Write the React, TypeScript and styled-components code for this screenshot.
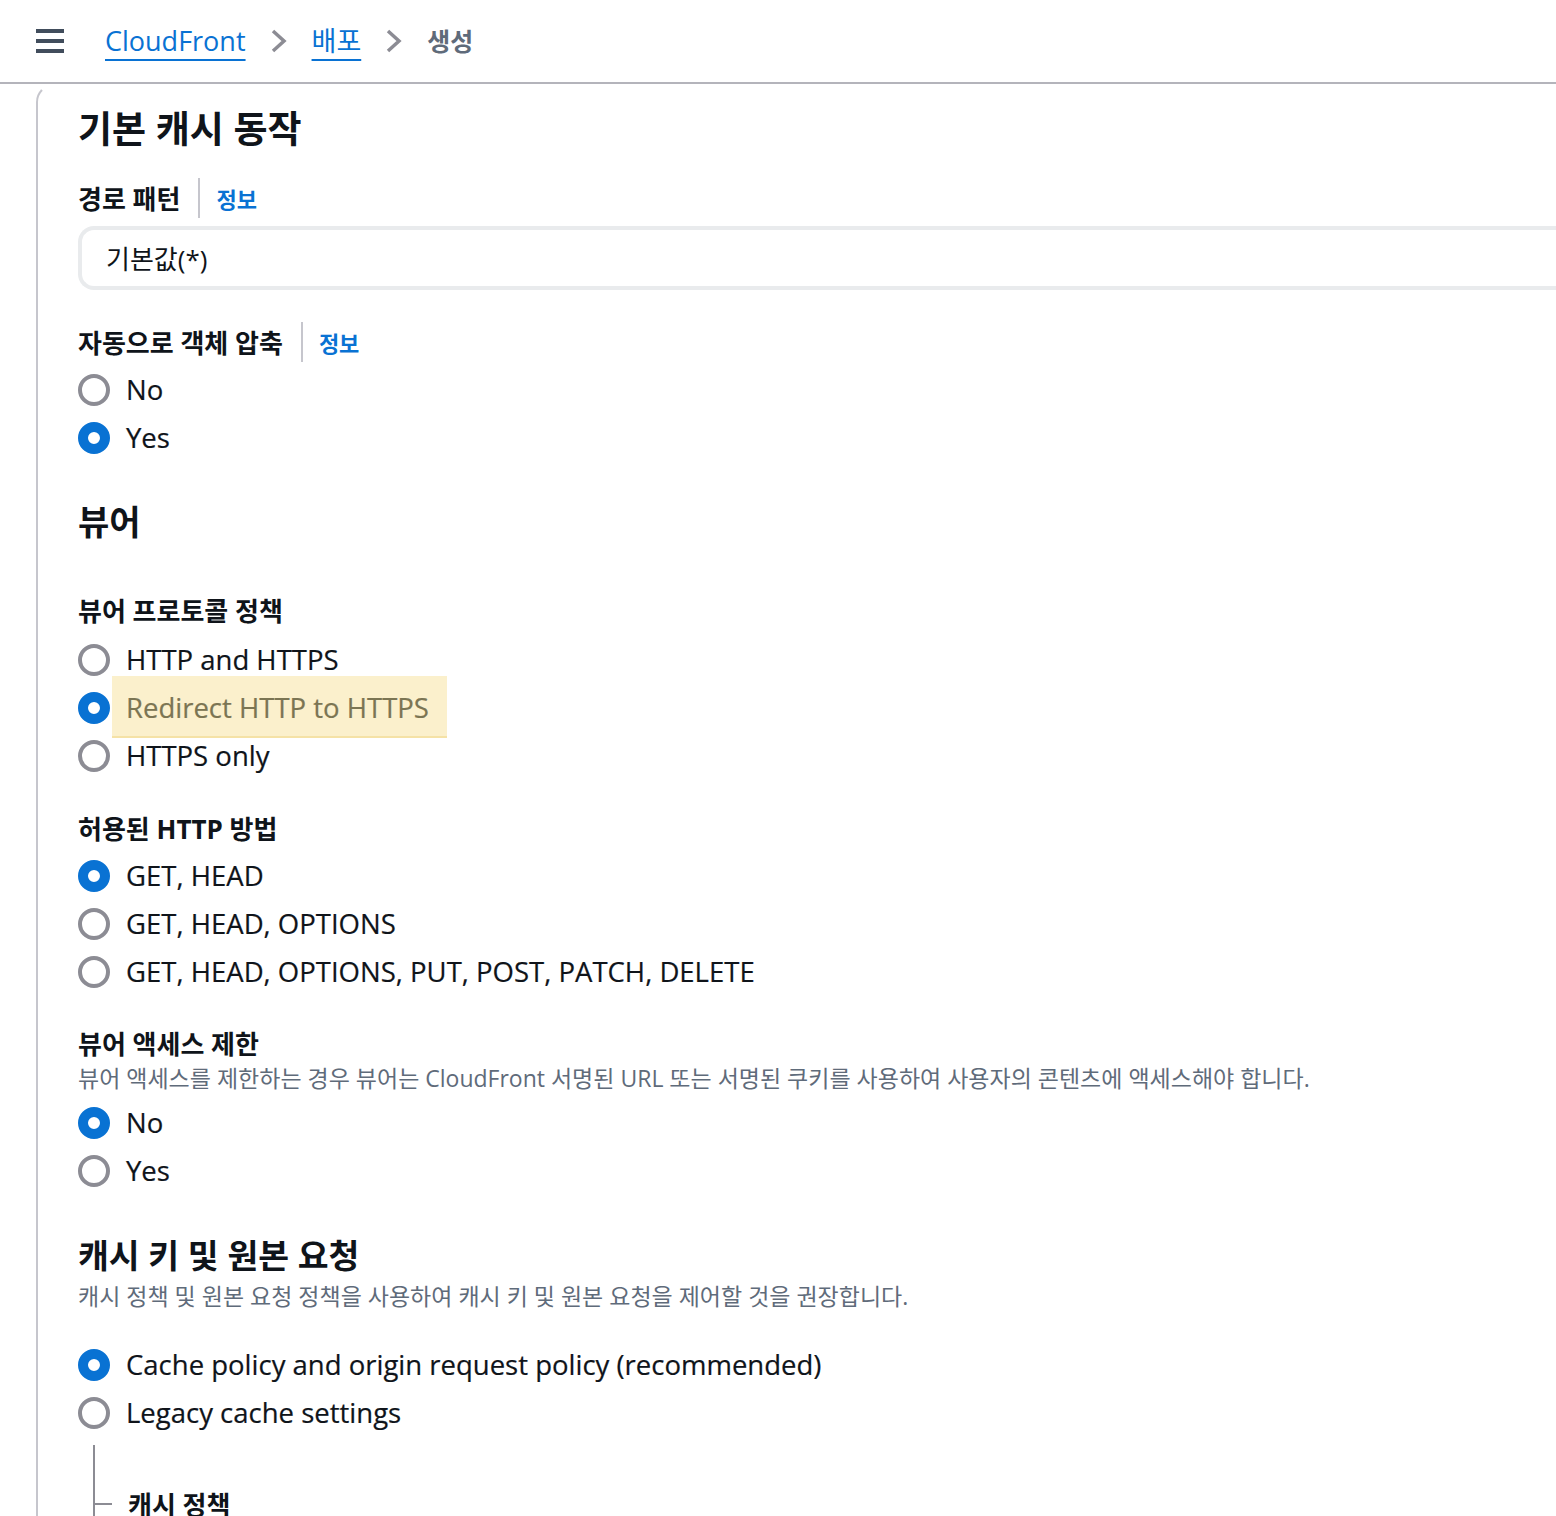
import React from "react";
import styled, { createGlobalStyle } from "styled-components";

const font = `"Open Sans", "Noto Sans CJK KR", sans-serif`;

const Global = createGlobalStyle`
  body {
    margin: 0;
    background: #fff;
    font-family: ${font};
    color: #0f141a;
    overflow: hidden;
  }
`;

const TopBar = styled.header`
  height: 82px;
  border-bottom: 2px solid #b4b4bb;
  display: flex;
  align-items: center;
  padding-left: 36px;
`;

const Burger = styled.button`
  width: 28px;
  height: 24px;
  padding: 0;
  border: 0;
  background: transparent;
  display: flex;
  flex-direction: column;
  justify-content: space-between;
  margin-right: 41px;
  span {
    display: block;
    height: 4px;
    background: #414d5c;
  }
`;

const Crumbs = styled.nav`
  display: flex;
  align-items: center;
  gap: 24px;
  font-size: 27px;
`;

const CrumbLink = styled.a`
  color: #0972d3;
  text-decoration: underline;
  text-decoration-thickness: 2px;
  text-underline-offset: 8px;
  line-height: 40px;
`;

const CrumbCurrent = styled.span`
  color: #5f6b7a;
  font-weight: 700;
  font-size: 25px;
  line-height: 40px;
`;

const Chevron = () => (
  <svg width="18" height="26" viewBox="0 0 18 26" fill="none">
    <path d="M3 3l11 10L3 23" stroke="#8c8c94" strokeWidth="3.5" />
  </svg>
);

const Body = styled.div`
  padding-left: 36px;
`;

const Panel = styled.main`
  border-left: 2px solid #c6c6cd;
  border-top: 2px solid transparent;
  border-top-left-radius: 18px;
  padding: 19px 0 0 40px;
  min-height: 1440px;
`;

const Title = styled.h1<{ $size?: number }>`
  margin: 0;
  font-size: ${(p) => p.$size ?? 37}px;
  line-height: 48px;
  font-weight: 700;
`;

const Section = styled.section<{ $gap: number }>`
  margin-top: ${(p) => p.$gap}px;
`;

const LabelRow = styled.div`
  display: flex;
  align-items: center;
  height: 40px;
`;

const Label = styled.span`
  font-size: 26px;
  font-weight: 700;
`;

const Divider = styled.span`
  width: 2px;
  height: 40px;
  background: #c6c6cd;
  margin: 0 16px 0 18px;
`;

const Info = styled.a`
  color: #0972d3;
  font-size: 22px;
  font-weight: 700;
`;

const Desc = styled.p<{ $top?: number }>`
  margin: ${(p) => p.$top ?? 0}px 0 0;
  color: #5f6b7a;
  font-size: 23px;
  line-height: 30px;
`;

const Field = styled.div`
  margin-top: 8px;
  height: 64px;
  box-sizing: border-box;
  border: 4px solid #e9ebed;
  border-right: 0;
  border-radius: 16px 0 0 16px;
  display: flex;
  align-items: center;
  padding-left: 24px;
  font-size: 26px;
`;

const Options = styled.div<{ $top: number }>`
  margin-top: ${(p) => p.$top}px;
  display: flex;
  flex-direction: column;
`;

const Option = styled.label`
  display: flex;
  align-items: center;
  height: 48px;
  gap: 16px;
`;

const Dot = styled.span<{ $on?: boolean }>`
  width: 32px;
  height: 32px;
  box-sizing: border-box;
  border-radius: 50%;
  border: ${(p) => (p.$on ? "10px solid #0972d3" : "4px solid #8c8c94")};
  background: #fff;
  flex: none;
`;

const OptionText = styled.span<{ $mark?: boolean }>`
  position: relative;
  font-size: 27.5px;
  line-height: 36px;
  color: ${(p) => (p.$mark ? "#7b7553" : "#0f141a")};
  -webkit-text-stroke: 0.2px ${(p) => (p.$mark ? "#7b7553" : "#0f141a")};
  ${(p) =>
    p.$mark &&
    `
    &::before {
      content: "";
      position: absolute;
      inset: -13px -18px -12px -14px;
      background: #fbf0cc;
      box-shadow: inset 0 -12px 0 -10px #f5e2a6;
      z-index: -1;
    }
  `}
`;

const Marked = styled.span`
  position: relative;
  z-index: 0;
`;

const Nested = styled.div`
  margin: 8px 0 0 15px;
  border-left: 2px solid #8c8c94;
  height: 80px;
  display: flex;
  align-items: flex-end;
`;

const NestedLabel = styled.div`
  display: flex;
  align-items: center;
  gap: 16px;
  margin-bottom: 2px;
  &::before {
    content: "";
    width: 17px;
    height: 2px;
    background: #8c8c94;
  }
`;

type Opt = { text: string; on?: boolean; mark?: boolean };

const Radios = ({ top, items }: { top: number; items: Opt[] }) => (
  <Options $top={top}>
    {items.map((o) => (
      <Option key={o.text}>
        <Dot $on={o.on} />
        {o.mark ? (
          <Marked>
            <OptionText $mark>{o.text}</OptionText>
          </Marked>
        ) : (
          <OptionText>{o.text}</OptionText>
        )}
      </Option>
    ))}
  </Options>
);

export default function App() {
  return (
    <>
      <Global />
      <TopBar>
        <Burger aria-label="menu">
          <span />
          <span />
          <span />
        </Burger>
        <Crumbs>
          <CrumbLink>CloudFront</CrumbLink>
          <Chevron />
          <CrumbLink>배포</CrumbLink>
          <Chevron />
          <CrumbCurrent>생성</CrumbCurrent>
        </Crumbs>
      </TopBar>
      <Body>
        <Panel>
          <Title>기본 캐시 동작</Title>

          <Section $gap={25}>
            <LabelRow>
              <Label>경로 패턴</Label>
              <Divider />
              <Info>정보</Info>
            </LabelRow>
            <Field>기본값(*)</Field>
          </Section>

          <Section $gap={32}>
            <LabelRow>
              <Label>자동으로 객체 압축</Label>
              <Divider />
              <Info>정보</Info>
            </LabelRow>
            <Radios top={4} items={[{ text: "No" }, { text: "Yes", on: true }]} />
          </Section>

          <Section $gap={36}>
            <Title $size={34}>뷰어</Title>
          </Section>

          <Section $gap={44}>
            <LabelRow>
              <Label>뷰어 프로토콜 정책</Label>
            </LabelRow>
            <Radios
              top={6}
              items={[
                { text: "HTTP and HTTPS" },
                { text: "Redirect HTTP to HTTPS", on: true, mark: true },
                { text: "HTTPS only" },
              ]}
            />
          </Section>

          <Section $gap={28}>
            <LabelRow>
              <Label>허용된 HTTP 방법</Label>
            </LabelRow>
            <Radios
              top={4}
              items={[
                { text: "GET, HEAD", on: true },
                { text: "GET, HEAD, OPTIONS" },
                { text: "GET, HEAD, OPTIONS, PUT, POST, PATCH, DELETE" },
              ]}
            />
          </Section>

          <Section $gap={27}>
            <LabelRow>
              <Label>뷰어 액세스 제한</Label>
            </LabelRow>
            <Desc>
              뷰어 액세스를 제한하는 경우 뷰어는 CloudFront 서명된 URL 또는 서명된 쿠키를 사용하여 사용자의 콘텐츠에 액세스해야 합니다.
            </Desc>
            <Radios top={6} items={[{ text: "No", on: true }, { text: "Yes" }]} />
          </Section>

          <Section $gap={36}>
            <Title $size={33.5}>캐시 키 및 원본 요청</Title>
            <Desc $top={2}>
              캐시 정책 및 원본 요청 정책을 사용하여 캐시 키 및 원본 요청을 제어할 것을 권장합니다.
            </Desc>
            <Radios
              top={30}
              items={[
                { text: "Cache policy and origin request policy (recommended)", on: true },
                { text: "Legacy cache settings" },
              ]}
            />
            <Nested>
              <NestedLabel>
                <Label>캐시 정책</Label>
              </NestedLabel>
            </Nested>
          </Section>
        </Panel>
      </Body>
    </>
  );
}
